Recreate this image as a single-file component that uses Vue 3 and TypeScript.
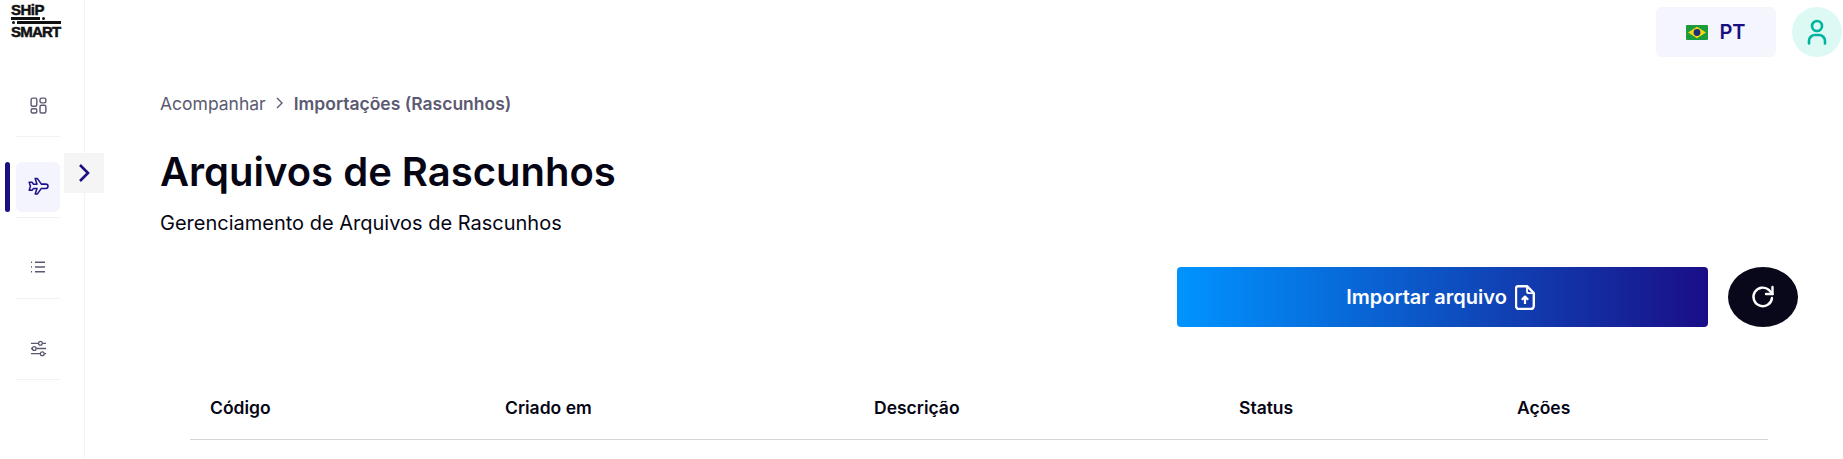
<template>
  <div class="layout">
    <aside class="sidebar">
      <div class="logo">
        <span class="logo-word ship">SHiP</span>
        <div class="logo-bar logo-bar-top"><i></i><b></b></div>
        <div class="logo-bar logo-bar-bottom"><b></b><i></i></div>
        <span class="logo-word smart">SMART</span>
      </div>

      <nav class="nav">
        <div class="nav-item">
          <div class="nav-icon">
            <svg width="17" height="17" viewBox="0 0 18 18" fill="none" stroke="#5b5a72" stroke-width="1.5">
              <rect x="1.2" y="1.2" width="6" height="8.6" rx="1.6" />
              <rect x="10.6" y="1.2" width="6.2" height="5" rx="1.6" />
              <rect x="1.2" y="12.4" width="6" height="4.6" rx="1.6" />
              <rect x="10.6" y="8.8" width="6.2" height="8.2" rx="1.6" />
            </svg>
          </div>
        </div>
        <div class="nav-item active">
          <div class="nav-icon">
            <svg width="21" height="19" viewBox="0 0 22 20" fill="none" stroke="#1a1088" stroke-width="1.6" stroke-linejoin="round">
              <path d="M7.5 1.5h2.2l4.3 6h4.6c1.5 0 2.4 1 2.4 2.2s-.9 2.3-2.4 2.3H14l-4.3 6H7.5l1.9-6H5.8l-1.6 2H1.2l1.3-4.2-1.3-4.2h3l1.6 2h3.6z" />
            </svg>
          </div>
        </div>
        <div class="nav-item">
          <div class="nav-icon">
            <svg width="16" height="14" viewBox="0 0 18 16" fill="none" stroke="#5b5a72" stroke-width="1.6">
              <path d="M5.5 2.500H17M5.5 8H17M5.5 13.500H17" />
              <path d="M1 2.500h1.200M1 8h1.200M1 13.500h1.200" stroke-width="1.8" />
            </svg>
          </div>
        </div>
        <div class="nav-item">
          <div class="nav-icon">
            <svg width="17" height="17" viewBox="0 0 18 18" fill="none" stroke="#5b5a72" stroke-width="1.4">
              <path d="M1 3.500h8M13 3.500h4M1 9h1.500M6.500 9H17M1 14.500h10M15 14.500h2" />
              <circle cx="11" cy="3.500" r="2" />
              <circle cx="4.500" cy="9" r="2" />
              <circle cx="13" cy="14.500" r="2" />
            </svg>
          </div>
        </div>
      </nav>

      <button class="expand">
        <svg width="14" height="20" viewBox="0 0 14 20" fill="none" stroke="#1a1081" stroke-width="2.6">
          <path d="M3 2l8 8-8 8" />
        </svg>
      </button>
    </aside>

    <main class="main">
      <header class="topbar">
        <div class="lang">
          <svg width="22" height="15" viewBox="0 0 22 15">
            <rect width="22" height="15" rx="1" fill="#1a9b3c" />
            <path d="M11 1.800L20 7.500 11 13.200 2 7.500z" fill="#f7d417" />
            <circle cx="11" cy="7.500" r="3.400" fill="#1b2f7a" />
          </svg>
          <span>PT</span>
        </div>
        <div class="avatar">
          <svg width="20" height="26" viewBox="0 0 20 26" fill="none" stroke="#00b39f" stroke-width="2.6">
            <circle cx="10" cy="7" r="5" />
            <path d="M2 24.500v-2.500a6 6 0 0 1 6-6h4a6 6 0 0 1 6 6v2.500" stroke-linecap="round" />
          </svg>
        </div>
      </header>

      <section class="content">
        <div class="breadcrumb">
          <span>Acompanhar</span>
          <svg width="10" height="14" viewBox="0 0 10 14" fill="none" stroke="#5b5a72" stroke-width="1.4">
            <path d="M2 2l5 5-5 5" />
          </svg>
          <strong>Importações (Rascunhos)</strong>
        </div>

        <h1>Arquivos de Rascunhos</h1>
        <p class="subtitle">Gerenciamento de Arquivos de Rascunhos</p>

        <div class="actions">
          <button class="btn-import">
            <span>Importar arquivo</span>
            <svg width="20" height="25" viewBox="0 0 20 25" fill="none" stroke="#fff" stroke-width="2.400" stroke-linejoin="round">
              <path d="M3 1.200h9l6.800 6.800v13a3 3 0 0 1-3 3H4a3 3 0 0 1-3-3V3a2 2 0 0 1 2-1.800z" />
              <path d="M12 1.200v5a2 2 0 0 0 2 2h5" stroke-width="1.800" />
              <path d="M10 19v-7M6.800 14.800L10 11.600l3.200 3.200" stroke-width="2.200" />
            </svg>
          </button>
          <button class="btn-refresh">
            <svg width="24" height="24" viewBox="0 0 24 24" fill="none" stroke="#fff" stroke-width="2.400" stroke-linejoin="round">
              <path d="M21 13A9.300 9.300 0 1 1 18 5L21.500 9" stroke-linecap="round" />
              <path d="M21.500 2V9H15" stroke-linecap="round" />
            </svg>
          </button>
        </div>

        <div class="table-head">
          <div v-for="col in columns" :key="col">{{ col }}</div>
        </div>
      </section>
    </main>
  </div>
</template>

<script setup lang="ts">
const columns: string[] = ["Código", "Criado em", "Descrição", "Status", "Ações"];
</script>

<style>
html,
body {
  margin: 0;
  background: #fff;
}
</style>

<style scoped>
.layout {
  display: flex;
  height: 459px;
  overflow: hidden;
  font-family: Inter, "Liberation Sans", sans-serif;
  color: #050514;
}
.sidebar {
  position: relative;
  flex: 0 0 85px;
  box-sizing: border-box;
  border-right: 1px solid #f3f3f6;
}
.logo {
  display: flex;
  flex-direction: column;
  align-items: flex-start;
  width: 50px;
  height: 35px;
  margin: 3px 0 0 11px;
  font-family: "Liberation Sans", sans-serif;
  font-weight: 700;
  color: #111;
}
.logo-word {
  font-size: 15px;
  line-height: 14px;
  -webkit-text-stroke: 0.5px #111;
}
.ship {
  letter-spacing: -0.5px;
}
.smart {
  margin-top: 1px;
  letter-spacing: -0.8px;
}
.logo-bar {
  display: flex;
  align-items: center;
  gap: 2px;
  height: 3px;
  margin-top: 1px;
}
.logo-bar-top {
  margin-top: 0;
}
.logo-bar b {
  display: block;
  height: 3px;
  background: #111;
}
.logo-bar i {
  display: block;
  width: 3px;
  height: 3px;
  border-radius: 50%;
  background: #111;
}
.logo-bar-top b {
  order: -1;
  width: 29px;
}
.logo-bar-bottom i {
  order: -1;
  margin-left: 1px;
}
.logo-bar-bottom b {
  width: 44px;
}
.nav {
  margin-top: 43px;
}
.nav-item {
  position: relative;
  box-sizing: border-box;
  width: 44px;
  height: 56px;
  margin: 0 0 25px 16px;
  border-bottom: 1px solid #f2f2f5;
}
.nav-icon {
  display: flex;
  align-items: center;
  justify-content: center;
  box-sizing: border-box;
  height: 50px;
  padding-bottom: 2px;
  border-radius: 6px;
}
.nav-item.active .nav-icon {
  background: #f4f4fe;
}
.nav-item.active::before {
  content: "";
  position: absolute;
  left: -11px;
  top: 0;
  width: 5px;
  height: 50px;
  border-radius: 3px;
  background: #1a1081;
}
.expand {
  position: absolute;
  left: 64px;
  top: 153px;
  display: flex;
  align-items: center;
  justify-content: center;
  width: 40px;
  height: 40px;
  padding: 0;
  border: none;
  background: #f5f5f6;
}
.main {
  flex: 1;
  min-width: 0;
}
.topbar {
  display: flex;
  justify-content: flex-end;
  gap: 16px;
  padding: 7px 1px 0 0;
}
.lang {
  display: flex;
  align-items: center;
  justify-content: center;
  gap: 11px;
  width: 120px;
  height: 50px;
  border-radius: 6px;
  background: #f5f5fe;
  color: #1a1081;
  font-size: 20px;
  font-weight: 600;
}
.avatar {
  display: flex;
  align-items: center;
  justify-content: center;
  width: 50px;
  height: 50px;
  border-radius: 50%;
  background: #dcf9f4;
}
.content {
  padding: 34px 45px 0 75px;
}
.breadcrumb {
  display: flex;
  align-items: center;
  gap: 9px;
  height: 24px;
  font-size: 17.500px;
  color: #5b5a72;
}
.breadcrumb strong {
  font-weight: 600;
}
h1 {
  margin: 31px 0 0;
  font-size: 40px;
  line-height: 52px;
  font-weight: 600;
}
.subtitle {
  margin: 13px 0 0;
  font-size: 20px;
  line-height: 24px;
}
.actions {
  display: flex;
  justify-content: flex-end;
  gap: 20px;
  margin-top: 32px;
}
.btn-import {
  display: flex;
  align-items: center;
  justify-content: center;
  gap: 8px;
  box-sizing: border-box;
  width: 531px;
  height: 60px;
  padding: 0 4px 0 0;
  border: none;
  border-radius: 4px;
  background: linear-gradient(90deg, #0094ff, #1a0e86);
  color: #fff;
  font-family: inherit;
  font-size: 20px;
  font-weight: 600;
}
.btn-refresh {
  display: flex;
  align-items: center;
  justify-content: center;
  width: 70px;
  height: 60px;
  padding: 0;
  border: none;
  border-radius: 50%;
  background: #08081a;
}
.table-head {
  display: grid;
  grid-template-columns: 295px 369px 365px 278px 271px;
  align-items: center;
  box-sizing: border-box;
  height: 65px;
  margin: 48px 30px 0;
  border-bottom: 1px solid #d6d6d9;
  font-size: 17.500px;
  font-weight: 600;
}
.table-head div {
  padding-left: 20px;
}
</style>
